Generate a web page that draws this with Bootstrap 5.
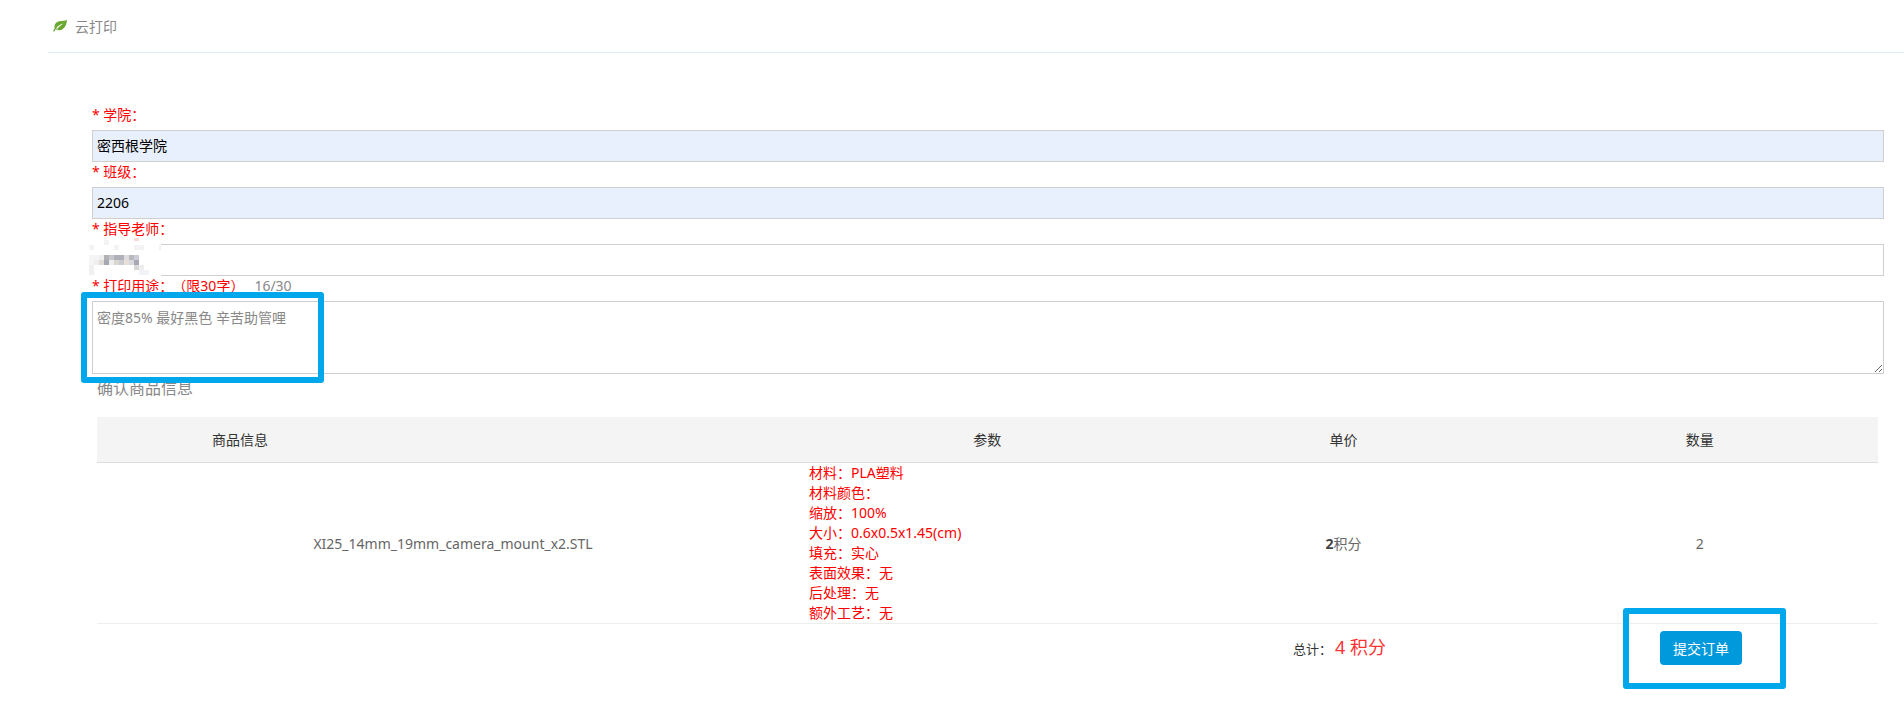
<!DOCTYPE html>
<html lang="zh-CN">
<head>
<meta charset="utf-8">
<title>云打印</title>
<link href="https://cdn.jsdelivr.net/npm/bootstrap@5.3.0/dist/css/bootstrap.min.css" rel="stylesheet">
<style>
html,body{height:717px;overflow:hidden;background:#fff}
body{font-family:"Noto Sans","Noto Sans CJK SC",sans-serif;font-size:14px;color:#666;position:relative}
.topbar{margin-left:48px;height:53px;border-bottom:1px solid #e2ebf1;padding-left:5px;color:#888}
.topbar svg{margin-right:8px}
.formzone{padding:52px 20px 0 92px}
.fieldlabel{display:block;height:25px;line-height:20px;padding-top:0;margin:0;color:#f00;font-size:14px;white-space:nowrap}
.fieldlabel .cnt{color:#888;margin-left:10px}
.fieldlabel .lim{margin-left:6px}
.form-control.plainbox{height:32px;min-height:0;padding:0 4px 2px;border:1px solid #cfcfcf;border-radius:0;font-size:14px;color:#000;box-shadow:none}
.form-control.plainbox.filled{background:#e8f0fe}
textarea.form-control.plainbox{height:73px;color:#888;padding:6px 4px 4px;line-height:20px;display:block}
.orderzone{padding-left:92px}
.sectitle{margin:4px 0 0 5px;height:39px;line-height:20px;font-size:16px;color:#888}
.ordertable{margin:0 6px 0 5px;width:1781px;table-layout:fixed;border-collapse:separate;border-spacing:0}
.ordertable th{height:46px;background:#f4f4f4;border-bottom:1px solid #ddd;font-weight:400;color:#333;text-align:center;vertical-align:middle;padding:0}
.ordertable th.goodsh{padding-right:426px}
.ordertable td{border-bottom:1px solid #eee;text-align:center;vertical-align:middle;padding:0;color:#666}
.ordertable td.params{text-align:left;color:#f00;line-height:20px}
.ordertable .c1{width:712px}
.ordertable b{color:#444}
.sumrow{margin:7px 0 0 5px;width:1781px;height:34px}
.sumtext{margin-left:1196px;width:367px;color:#333;font-size:13px;line-height:32px;height:34px}
.sumval{color:#f33;font-size:18px;margin-left:3px}
.btn.submitbtn{width:82px;height:34px;padding:0;background:#0099dc;border:0;border-radius:4px;color:#fff;font-size:14px}
.callout{position:absolute;border:6px solid #00a7eb;border-radius:3px;pointer-events:none}
.callout.one{left:81px;top:292px;width:243px;height:91px}
.callout.two{left:1623px;top:608px;width:163px;height:81px}
.mosaic{position:absolute;left:89px;top:238px}
</style>
</head>
<body>
<div class="topbar d-flex align-items-center">
  <svg width="14" height="12" viewBox="0 0 14 12"><path d="M14 0C13.6 5.5 11 10 6.5 10.2 4.8 10.3 3.6 9.8 2.8 9L1.4 11.6 0 11.2 1.7 8C.9 5 2.8 1.8 6.5 1.2 9.5.8 12 .9 14 0Z" fill="#6aa832"/><path d="M3 8.6C4.5 6.2 7 4.6 10.5 3.6 8 5.4 6 6.8 4.4 8.8Z" fill="#fff"/></svg>
  <span>云打印</span>
</div>
<form class="formzone">
  <label class="fieldlabel">* 学院：</label>
  <input class="form-control plainbox filled" type="text" value="密西根学院">
  <label class="fieldlabel">* 班级：</label>
  <input class="form-control plainbox filled" type="text" value="2206">
  <label class="fieldlabel">* 指导老师：</label>
  <input class="form-control plainbox" type="text">
  <label class="fieldlabel">* 打印用途：<span class="lim">（限30字）</span><span class="cnt">16/30</span></label>
  <textarea class="form-control plainbox">密度85% 最好黑色 辛苦助管哩</textarea>
</form>
<div class="orderzone">
  <div class="sectitle">确认商品信息</div>
  <table class="ordertable">
    <thead>
      <tr><th class="c1 goodsh">商品信息</th><th>参数</th><th>单价</th><th>数量</th></tr>
    </thead>
    <tbody>
      <tr>
        <td>XI25_14mm_19mm_camera_mount_x2.STL</td>
        <td class="params">材料：PLA塑料<br>材料颜色：<br>缩放：100%<br>大小：0.6x0.5x1.45(cm)<br>填充：实心<br>表面效果：无<br>后处理：无<br>额外工艺：无</td>
        <td><b>2</b>积分</td>
        <td>2</td>
      </tr>
    </tbody>
  </table>
  <div class="sumrow d-flex">
    <div class="sumtext">总计：<span class="sumval">4 积分</span></div>
    <button type="button" class="btn submitbtn">提交订单</button>
  </div>
</div>
<svg class="mosaic" width="75" height="40" viewBox="0 0 75 40" shape-rendering="crispEdges">
  <rect x="0" y="2" width="72" height="36" fill="#fff"/>
  <rect x="45" y="0" width="5" height="3" fill="#fcdcd5"/>
  <rect x="15" y="2" width="5" height="5" fill="#f3f3f3"/>
  <rect x="0" y="7" width="5" height="5" fill="#f3f3f3"/>
  <rect x="25" y="7" width="5" height="5" fill="#f3f3f3"/>
  <rect x="45" y="7" width="10" height="5" fill="#f3f3f3"/>
  <rect x="70" y="7" width="2" height="5" fill="#f3f3f3"/>
  <rect x="0" y="17" width="10" height="5" fill="#f5f5f5"/>
  <rect x="10" y="17" width="5" height="5" fill="#eeeeee"/>
  <rect x="15" y="17" width="5" height="5" fill="#b0b0b5"/>
  <rect x="20" y="17" width="5" height="5" fill="#c8c8cc"/>
  <rect x="25" y="17" width="10" height="5" fill="#b0b0ba"/>
  <rect x="35" y="17" width="5" height="5" fill="#dddddd"/>
  <rect x="40" y="17" width="5" height="5" fill="#b8b8be"/>
  <rect x="45" y="17" width="5" height="5" fill="#ccccd4"/>
  <rect x="0" y="22" width="5" height="5" fill="#f5f5f5"/>
  <rect x="5" y="22" width="5" height="5" fill="#eeeeee"/>
  <rect x="10" y="22" width="5" height="5" fill="#e0dcd8"/>
  <rect x="15" y="22" width="5" height="5" fill="#a5a8b0"/>
  <rect x="20" y="22" width="5" height="5" fill="#eeeeee"/>
  <rect x="25" y="22" width="5" height="5" fill="#d8d8d0"/>
  <rect x="30" y="22" width="5" height="5" fill="#c8ccd0"/>
  <rect x="35" y="22" width="5" height="5" fill="#e8e0d8"/>
  <rect x="40" y="22" width="5" height="5" fill="#d8d8e0"/>
  <rect x="45" y="22" width="5" height="5" fill="#a8a8b4"/>
  <rect x="0" y="27" width="5" height="5" fill="#f0f0f0"/>
  <rect x="45" y="27" width="5" height="5" fill="#d8d8d8"/>
  <rect x="50" y="27" width="5" height="5" fill="#eeeeee"/>
  <rect x="0" y="32" width="5" height="5" fill="#f0f0f0"/>
  <rect x="50" y="32" width="10" height="5" fill="#eff3f7"/>
</svg>
<div class="callout one"></div>
<div class="callout two"></div>
<script src="https://cdn.jsdelivr.net/npm/bootstrap@5.3.0/dist/js/bootstrap.bundle.min.js"></script>
</body>
</html>
